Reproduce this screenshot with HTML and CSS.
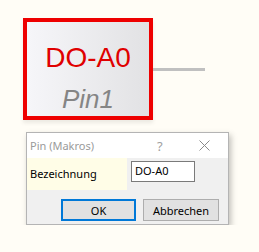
FILE: index.html
```html
<!DOCTYPE html>
<html lang="de">
<head>
  <meta charset="UTF-8" />
  <meta name="viewport" content="width=device-width, initial-scale=1.0"/>
  <title>Pin (Makros)</title>
  <link rel="stylesheet" href="styles.css">
</head>
<body>
  <div class="canvas">
    <div class="node">
      <div class="pin-box">
        <div class="pin-name">DO-A0</div>
        <div class="pin-label">Pin1</div>
      </div>
      <div class="pin-wire"></div>
    </div>

    <div class="dialog">
      <div class="title-bar">
        <span class="title">Pin (Makros)</span>
        <span class="help">?</span>
        <svg class="close" width="11" height="11" viewBox="0 0 11 11">
          <path d="M0.5 0.5 L10.5 10.5 M10.5 0.5 L0.5 10.5" stroke="#8a8a8a" stroke-width="1" fill="none"/>
        </svg>
      </div>
      <div class="field-row">
        <div class="field-label">Bezeichnung</div>
        <div class="field-value">
          <input class="field-input" type="text" value="DO-A0">
        </div>
      </div>
      <div class="button-row">
        <button class="btn btn-default">OK</button>
        <button class="btn">Abbrechen</button>
      </div>
    </div>
  </div>
</body>
</html>
```

FILE: styles.css
```css
body {
  margin: 0;
  background: #fffdf6;
  font-family: 'Segoe UI', 'Noto Sans', sans-serif;
}

.canvas {
  padding-top: 18px;
}

.node {
  display: flex;
  margin-left: 23px;
}

.pin-box {
  width: 130px;
  height: 102px;
  box-sizing: border-box;
  border: 4px solid #ee0000;
  background: linear-gradient(90deg, #f6f6f9 0%, #e2e2e4 100%);
  box-shadow: 0 3px 4px rgba(0, 0, 0, 0.08);
  display: flex;
  flex-direction: column;
  align-items: center;
  font-family: 'Liberation Sans', Arial, sans-serif;
}

.pin-name {
  margin-top: 20px;
  font-size: 28px;
  line-height: 32px;
  color: #e00000;
}

.pin-label {
  margin-top: 10px;
  font-size: 26px;
  line-height: 30px;
  font-style: italic;
  color: #858585;
}

.pin-wire {
  width: 52px;
  height: 3px;
  margin-top: 50px;
  background: #c0c0c0;
}

.dialog {
  width: 203px;
  margin: 12px 0 0 26px;
  box-sizing: border-box;
  border: 1px solid #b4b4b4;
  background: #f0f0f0;
  box-shadow: 2px 3px 6px rgba(0, 0, 0, 0.25);
  font-size: 11px;
}

.title-bar {
  height: 25px;
  background: #fff;
  display: flex;
  align-items: center;
  color: #9a9a9a;
}

.title {
  width: 127px;
  padding-left: 3px;
}

.help {
  width: 42px;
  font-size: 13px;
  color: #a0a0a0;
}

.field-row {
  display: flex;
  height: 32px;
}

.field-label {
  width: 100px;
  background: #fffde7;
  display: flex;
  align-items: center;
  padding: 0 0 2px 3px;
  box-sizing: border-box;
  color: #000;
}

.field-value {
  padding: 3px 0 0 4px;
}

.field-input {
  width: 64px;
  height: 21px;
  box-sizing: border-box;
  border: 1px solid #7a7a7a;
  padding: 0 0 3px 3px;
  font-family: inherit;
  font-size: 11px;
  color: #000;
  background: #fff;
  outline: none;
}

.button-row {
  display: flex;
  gap: 7px;
  padding: 9px 0 3px 34px;
  height: 34px;
  box-sizing: border-box;
}

.btn {
  width: 76px;
  height: 22px;
  box-sizing: border-box;
  border: 1px solid #adadad;
  background: #e1e1e1;
  font-family: inherit;
  font-size: 11px;
  color: #000;
  padding: 0;
}

.btn-default {
  width: 75px;
  border: 2px solid #0078d7;
}
```
